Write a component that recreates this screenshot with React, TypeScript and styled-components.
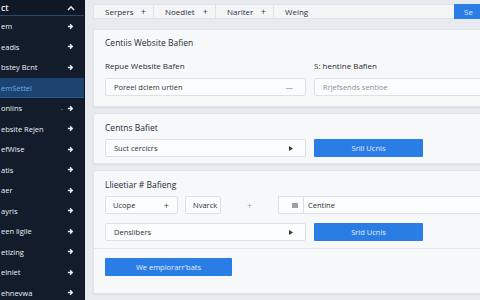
import React from "react";
import styled, { createGlobalStyle } from "styled-components";

const GlobalStyle = createGlobalStyle`
  html, body {
    margin: 0;
    padding: 0;
    width: 480px;
    height: 300px;
    overflow: hidden;
    background: #e7eaee;
    font-family: "Open Sans", "Liberation Sans", sans-serif;
  }
`;

type NavItem = {
  label: string;
  active?: boolean;
  dash?: boolean;
};

const navItems: NavItem[] = [
  { label: "em" },
  { label: "eadis" },
  { label: "bstey Bcnt" },
  { label: "emSettel", active: true },
  { label: "onlins", dash: true },
  { label: "ebsite Rejen" },
  { label: "efWise" },
  { label: "atis" },
  { label: "aer" },
  { label: "ayris" },
  { label: "een ligile" },
  { label: "etlzing" },
  { label: "elniet" },
  { label: "ehnevwa" },
];

const tabs = [
  { label: "Serpers", width: 60 },
  { label: "Noediet", width: 62 },
  { label: "Nariter", width: 58 },
];

const Arrow = () => (
  <svg width="7" height="7" viewBox="0 0 8 8">
    <path d="M1 4h4.5M3.5 1.5L6 4 3.5 6.5" stroke="#e8edf3" strokeWidth="1.6" fill="none" />
  </svg>
);

const Caret = () => (
  <svg width="8" height="6" viewBox="0 0 8 6">
    <path d="M1 5L4 1.8 7 5" stroke="#e8edf3" strokeWidth="1.5" fill="none" />
  </svg>
);

const Play = () => (
  <svg width="4" height="5" viewBox="0 0 4 5">
    <path d="M0 0L4 2.5 0 5z" fill="#333a44" />
  </svg>
);

function App() {
  return (
    <Page>
      <GlobalStyle />
      <Sidebar>
        <SideHeader>
          <span>ct</span>
          <Caret />
        </SideHeader>
        {navItems.map((item) => (
          <SideRow key={item.label} $active={item.active}>
            <span>{item.label}</span>
            {!item.active && (
              <RowIcons>
                {item.dash && <Dash>-</Dash>}
                <Arrow />
              </RowIcons>
            )}
          </SideRow>
        ))}
      </Sidebar>

      <Main>
        <TabBar>
          {tabs.map((t) => (
            <Tab key={t.label} $w={t.width}>
              {t.label}
              <Plus>+</Plus>
            </Tab>
          ))}
          <Tab $grow>Weing</Tab>
          <TopButton>Se</TopButton>
        </TabBar>

        <Card $pt={7} $pb={10}>
          <CardTitle>Centiis Website Bafien</CardTitle>
          <FieldGrid>
            <Field>
              <Label>Repue Website Bafen</Label>
              <Input>
                Poreel dclem urtien
                <InputDash>—</InputDash>
              </Input>
            </Field>
            <Field>
              <Label>S: hentine Bafien</Label>
              <Input $placeholder>Rrjefsends sentioe</Input>
            </Field>
          </FieldGrid>
        </Card>

        <Card $pt={8} $pb={6}>
          <CardTitle $mb={5}>Centns Bafiet</CardTitle>
          <Row>
            <Input>
              Suct cercicrs
              <Play />
            </Input>
            <BlueButton $w={109}>Srill Ucnis</BlueButton>
          </Row>
        </Card>

        <Card $pt={8} $pb={17}>
          <CardTitle $mb={5}>Llieetiar # Bafieng</CardTitle>
          <ChipRow>
            <Chip $w={73}>
              Ucope
              <Plus>+</Plus>
            </Chip>
            <Chip $w={36}>Nvarck</Chip>
            <FaintPlus>+</FaintPlus>
            <SplitBox>
              <IconCell>
                <GraySquare />
              </IconCell>
              <span>Centine</span>
            </SplitBox>
          </ChipRow>
          <Row>
            <Input>
              Denslibers
              <Play />
            </Input>
            <BlueButton $w={109}>Srid Ucnis</BlueButton>
          </Row>
          <Divider />
          <BlueButton $w={127}>We emplorarr'bats</BlueButton>
        </Card>

        <Card $pt={8} $pb={8} />
      </Main>
    </Page>
  );
}

export default App;

const Page = styled.div`
  display: flex;
  width: 525px;
  height: 300px;
  overflow: hidden;
`;

const Sidebar = styled.div`
  width: 84px;
  flex-shrink: 0;
  background: #121c2a;
  color: #e9eef4;
  font-size: 7.5px;
  border-right: 1px solid #0b121b;
`;

const SideHeader = styled.div`
  height: 15px;
  display: flex;
  align-items: center;
  justify-content: space-between;
  padding: 0 9px 0 1px;
  background: #0f1824;
  border-bottom: 1px solid #2b4866;
  font-size: 8.5px;
  font-weight: 600;
`;

const SideRow = styled.div<{ $active?: boolean }>`
  height: 20.5px;
  display: flex;
  align-items: center;
  justify-content: space-between;
  padding: 0 10px 0 1px;
  background: ${(p) => (p.$active ? "#1d4470" : "transparent")};
  color: ${(p) => (p.$active ? "#6aa8ea" : "#e9eef4")};
  box-shadow: ${(p) => (p.$active ? "inset 0 -1px 0 #2a5a8e" : "none")};
`;

const RowIcons = styled.div`
  display: flex;
  align-items: center;
  gap: 4px;
`;

const Dash = styled.span`
  color: #8fa0b3;
`;

const Main = styled.div`
  flex: 1;
  padding: 4px 0 0 8px;
  display: flex;
  flex-direction: column;
  gap: 6px;
  color: #2b3038;
  font-size: 8px;
`;

const TabBar = styled.div`
  height: 19px;
  display: flex;
  align-items: stretch;
  background: #f3f5f7;
  border: 1px solid #dfe3e8;
  margin-bottom: 4px;
`;

const Tab = styled.div<{ $grow?: boolean; $w?: number }>`
  display: flex;
  align-items: center;
  justify-content: space-between;
  box-sizing: border-box;
  width: ${(p) => (p.$w ? `${p.$w}px` : "auto")};
  padding: 0 7px 0 11px;
  border-right: ${(p) => (p.$grow ? "none" : "1px solid #dfe3e8")};
  flex: ${(p) => (p.$grow ? 1 : "none")};
  color: #2d333b;
`;

const Plus = styled.span`
  font-size: 9px;
  color: #3a4049;
`;

const TopButton = styled.div`
  width: 60px;
  margin: -1px 0;
  background: #2b7de6;
  color: #d8e8fb;
  display: flex;
  align-items: center;
  padding-left: 10px;
`;

const Card = styled.div<{ $pt: number; $pb: number }>`
  background: #f7f8fa;
  border: 1px solid #e0e4e9;
  border-radius: 2px;
  padding: ${(p) => p.$pt}px 0 ${(p) => p.$pb}px 11px;
  display: flex;
  flex-direction: column;
  box-shadow: 0 1px 2px rgba(40, 50, 70, 0.06);
`;

const CardTitle = styled.div<{ $mb?: number }>`
  height: 12px;
  line-height: 12px;
  font-size: 8.5px;
  font-weight: 500;
  color: #262b33;
  margin-bottom: ${(p) => p.$mb ?? 12}px;
`;

const FieldGrid = styled.div`
  display: grid;
  grid-template-columns: 201px 200px;
  gap: 8px;
`;

const Field = styled.div`
  display: flex;
  flex-direction: column;
`;

const Label = styled.div`
  height: 10px;
  line-height: 10px;
  font-size: 8px;
  color: #262b33;
  margin-bottom: 7px;
`;

const Input = styled.div<{ $placeholder?: boolean }>`
  height: 18px;
  box-sizing: border-box;
  width: 201px;
  background: #fbfcfd;
  border: 1px solid #dde1e6;
  border-radius: 2px;
  display: flex;
  align-items: center;
  justify-content: space-between;
  padding: 0 12px 0 8px;
  color: ${(p) => (p.$placeholder ? "#8a9099" : "#2d333b")};
  font-size: 7.5px;
`;

const InputDash = styled.span`
  color: #7b828b;
`;

const Row = styled.div`
  display: flex;
  gap: 8px;
  align-items: center;
`;

const BlueButton = styled.div<{ $w: number }>`
  width: ${(p) => p.$w}px;
  height: 18px;
  background: #2b7de6;
  color: #e3eefc;
  border-radius: 1px;
  display: flex;
  align-items: center;
  justify-content: center;
  font-size: 7.5px;
`;

const ChipRow = styled.div`
  display: flex;
  align-items: center;
  height: 18px;
  margin-bottom: 9px;
`;

const Chip = styled.div<{ $w: number }>`
  width: ${(p) => p.$w}px;
  height: 18px;
  box-sizing: border-box;
  border: 1px solid #dde1e6;
  background: #fbfcfd;
  border-radius: 2px;
  display: flex;
  align-items: center;
  justify-content: space-between;
  padding: 0 8px 0 7px;
  margin-right: 7px;
  font-size: 7.5px;
`;

const FaintPlus = styled.span`
  width: 43px;
  text-align: center;
  color: #a2a8b0;
  font-size: 9px;
`;

const SplitBox = styled.div`
  flex: 1;
  height: 18px;
  box-sizing: border-box;
  border: 1px solid #dde1e6;
  border-right: none;
  background: #fbfcfd;
  display: flex;
  align-items: center;
  font-size: 7.5px;
  margin-left: 7px;
`;

const IconCell = styled.div`
  width: 25px;
  height: 100%;
  display: flex;
  align-items: center;
  justify-content: flex-end;
  padding-right: 5px;
  box-sizing: border-box;
  border-right: 1px solid #dde1e6;
  margin-right: 4px;
`;

const GraySquare = styled.div`
  width: 6px;
  height: 5px;
  background: #9aa0a8;
`;

const Divider = styled.div`
  height: 1px;
  background: #e2e6eb;
  margin: 7px -11px 9px -11px;
`;
